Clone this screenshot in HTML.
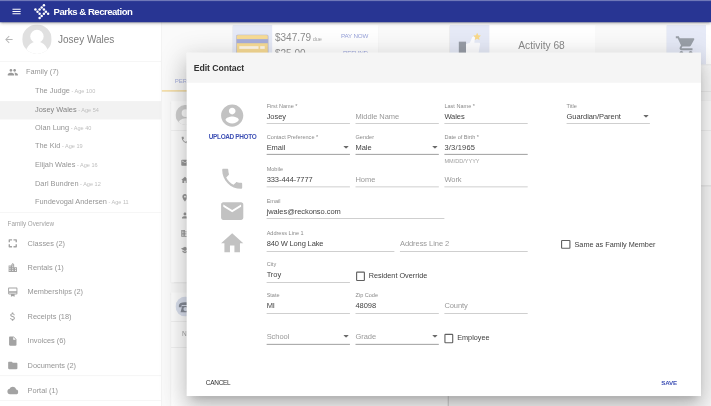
<!DOCTYPE html>
<html><head><meta charset="utf-8"><title>Parks &amp; Recreation</title>
<style>
html,body{margin:0;padding:0;width:711px;height:406px;overflow:hidden;background:#fafafa;}
body{font-family:"Liberation Sans",sans-serif;position:relative;will-change:transform;}
#s{position:absolute;left:0;top:0;width:1280px;height:731px;transform:scale(0.55547);transform-origin:0 0;overflow:hidden;background:#fafafa;}
#s *{box-sizing:border-box;}
.a{position:absolute;}
.t{position:absolute;white-space:nowrap;line-height:20px;height:20px;}
#hdr{left:0;top:0;width:1280px;height:40px;background:#283593;box-shadow:0 2px 4px -1px rgba(0,0,0,.3),0 4px 5px 0 rgba(0,0,0,.18),0 1px 10px 0 rgba(0,0,0,.14);z-index:5;}
#hdr .topline{left:0;top:0;width:1280px;height:2px;background:#6f78b8;}
#hdr .ttl{left:96.5px;top:11.0px;font-size:17.2px;letter-spacing:-0.88px;font-weight:bold;color:#fff;}
#side{left:0;top:0;width:291px;height:731px;background:#fff;z-index:3;border-right:1px solid #ececec;}
.nm{font-size:13.3px;color:#959595;left:63px;}
.nm small{font-size:10px;color:#bebebe;}
.mi{font-size:13.3px;color:#959595;left:49.7px;}
.hl{left:0;width:290px;background:#f2f2f2;}
.dv{left:0;width:290px;height:1px;background:#eeeeee;}
.card{background:#fff;box-shadow:0 1px 3px rgba(0,0,0,.12),0 1px 2px rgba(0,0,0,.1);}
.tile{left:0;top:0;width:70.8px;height:70.5px;background:#e6eaf7;}
#dlg{left:336px;top:95.2px;width:926px;height:618.3px;background:#fff;z-index:10;box-shadow:0 11px 15px -7px rgba(0,0,0,.2),0 24px 38px 3px rgba(0,0,0,.14),0 9px 46px 8px rgba(0,0,0,.12);}
#dlg .dh{left:0;top:0;width:926px;height:54px;background:#f5f5f5;}
.lb{font-size:10px;color:#8a8a8a;line-height:12px;height:12px;}
.v{font-size:13.5px;letter-spacing:-0.1px;color:#444444;}
.ph{font-size:13.5px;letter-spacing:-0.1px;color:#999999;}
.ul{height:1.3px;background:#a9a9a9;}
.cb{border:2px solid #606060;border-radius:2px;}
.cl{font-size:13.1px;color:#3d3d3d;}
.btn{font-size:11.6px;letter-spacing:-0.62px;font-weight:bold;}
</style></head><body>
<div id="s">
<div class="a" id="main" style="left:290px;top:40px;width:990px;height:691px;background:#fafafa;"></div>
<div class="a card" style="left:419.3px;top:45.4px;width:262px;height:70.6px"><div class="a tile"></div><svg class="a" style="left:6.2px;top:17px" width="58.4" height="46" viewBox="0 0 58.4 46"><rect x="0.5" y="0.5" width="57.4" height="45" rx="3" fill="#f8dc95" stroke="#aab1dd" stroke-width="1.2"/><rect x="1" y="8.4" width="56.4" height="7.4" fill="#a7aedb"/><rect x="5.8" y="21.2" width="34.6" height="4.8" fill="#fff9ec"/><rect x="43.4" y="21.2" width="8.2" height="4.8" fill="#fff9ec"/></svg><div class="t" style="left:75.7px;top:10.8px;font-size:18px;line-height:24px;height:24px;color:#8e8e8e">$347.79<span style="font-size:10px;color:#a5a5a5"> due</span></div><div class="t" style="left:75.7px;top:39.6px;font-size:18px;line-height:24px;height:24px;color:#8e8e8e">$25.00<span style="font-size:10px;color:#a5a5a5"> credit</span></div><div class="t btn" style="left:194.7px;top:9.6px;color:#98a2d9;font-weight:normal;font-size:11.2px;letter-spacing:-0.3px">PAY NOW</div><div class="t btn" style="left:198px;top:40px;color:#98a2d9;font-weight:normal;font-size:11.2px;letter-spacing:-0.3px">REFUND</div></div>
<div class="a card" style="left:810.1px;top:45.4px;width:262px;height:70.6px"><div class="a tile"></div><svg class="a" style="left:12px;top:14px" width="46" height="46" viewBox="0 0 46 46"><rect x="4" y="16" width="13" height="26" fill="#989da7"/><path fill="#fdfdff" d="M17 20 L24 18 L28 8 Q31 5 33 9 L32 18 L41 18 Q43 19 42 22 L39 40 Q38 42 35 42 L17 42 Z"/><path fill="#f9d98a" d="M37 0 L39.1 4.3 L43.8 5 L40.4 8.3 L41.2 13 L37 10.8 L32.8 13 L33.6 8.3 L30.2 5 L34.9 4.3 Z"/></svg><div class="t" style="left:122.9px;top:24.2px;font-size:18.4px;line-height:24px;height:24px;color:#8a8a8a">Activity 68</div></div>
<div class="a card" style="left:1200.3px;top:45.4px;width:262px;height:70.6px"><div class="a tile"></div><svg class="a" style="left:15px;top:16.5px" width="40" height="40" viewBox="0 0 24 24"><path fill="#9aa0a8" d="M7 18c-1.1 0-1.99.9-1.99 2S5.9 22 7 22s2-.9 2-2-.9-2-2-2zM1 2v2h2l3.6 7.59-1.35 2.45c-.16.28-.25.61-.25.96 0 1.1.9 2 2 2h12v-2H7.42c-.14 0-.25-.11-.25-.25l.03-.12.9-1.63h7.45c.75 0 1.41-.41 1.75-1.03l3.58-6.49c.08-.14.12-.31.12-.48 0-.55-.45-1-1-1H5.21l-.94-2H1zm16 16c-1.1 0-1.99.9-1.99 2s.89 2 1.99 2 2-.9 2-2-.9-2-2-2z"/></svg></div>
<div class="a" style="left:290px;top:164px;width:990px;height:1px;background:#e2e2e2"></div>
<div class="a" style="left:290px;top:162.3px;width:200px;height:2.7px;background:#f6e0ab"></div>
<div class="t" style="left:314.5px;top:134.7px;font-size:11px;color:#a8b0dc">PERSONAL</div>
<div class="a card" style="left:307.5px;top:181.5px;width:499.5px;height:327.5px"><svg class="a" style="left:8.8px;top:7.5px" width="36" height="36" viewBox="0 0 36 36"><defs><clipPath id="avc2"><circle cx="18" cy="18" r="18"/></clipPath></defs><circle cx="18" cy="18" r="18" fill="#d2d2d2"/><g clip-path="url(#avc2)" fill="#fff"><circle cx="18" cy="14.5" r="7"/><ellipse cx="18" cy="34" rx="13.5" ry="10"/></g></svg><div class="a" style="left:0;top:52.5px;width:954px;height:1px;background:#e8e8e8"></div></div>
<svg class="a" style="left:324.5px;top:244.3px" width="16" height="16" viewBox="0 0 24 24"><path fill="#9c9c9c" d="M6.62 10.79c1.44 2.83 3.76 5.14 6.59 6.59l2.2-2.2c.27-.27.67-.36 1.02-.24 1.12.37 2.33.57 3.57.57.55 0 1 .45 1 1V20c0 .55-.45 1-1 1-9.39 0-17-7.61-17-17 0-.55.45-1 1-1h3.5c.55 0 1 .45 1 1 0 1.25.2 2.45.57 3.57.11.35.03.74-.25 1.02l-2.2 2.2z"/></svg>
<svg class="a" style="left:324.5px;top:284.6px" width="16" height="16" viewBox="0 0 24 24"><path fill="#9c9c9c" d="M20 4H4c-1.1 0-1.99.9-1.99 2L2 18c0 1.100.9 2 2 2h16c1.1 0 2-.9 2-2V6c0-1.1-.9-2-2-2zm0 4l-8 5-8-5V6l8 5 8-5v2z"/></svg>
<svg class="a" style="left:324.5px;top:316.0px" width="16" height="16" viewBox="0 0 24 24"><path fill="#9c9c9c" d="M10 20v-6h4v6h5v-8h3L12 3 2 12h3v8z"/></svg>
<svg class="a" style="left:324.5px;top:347.7px" width="16" height="16" viewBox="0 0 24 24"><path fill="#9c9c9c" d="M12 2C8.13 2 5 5.13 5 9c0 5.250 7 13 7 13s7-7.75 7-13c0-3.87-3.13-7-7-7zm0 9.5c-1.38 0-2.5-1.12-2.5-2.5s1.12-2.5 2.5-2.5 2.5 1.12 2.5 2.5-1.12 2.5-2.5 2.500z"/></svg>
<svg class="a" style="left:324.5px;top:379.8px" width="16" height="16" viewBox="0 0 24 24"><path fill="#9c9c9c" d="M12 12c2.21 0 4-1.79 4-4s-1.79-4-4-4-4 1.79-4 4 1.79 4 4 4zm0 2c-2.67 0-8 1.34-8 4v2h16v-2c0-2.66-5.33-4-8-4z"/></svg>
<svg class="a" style="left:324.5px;top:411.5px" width="16" height="16" viewBox="0 0 24 24"><path fill="#9c9c9c" d="M12 7V3H2v18h20V7H12zM6 19H4v-2h2v2zm0-4H4v-2h2v2zm0-4H4V9h2v2zm0-4H4V5h2v2zm4 12H8v-2h2v2zm0-4H8v-2h2v2zm0-4H8V9h2v2zm0-4H8V5h2v2zm10 12h-8v-2h2v-2h-2v-2h2v-2h-2V9h8v10zm-2-8h-2v2h2v-2zm0 4h-2v2h2v-2z"/></svg>
<svg class="a" style="left:324.5px;top:442.4px" width="16" height="16" viewBox="0 0 24 24"><path fill="#9c9c9c" d="M5 13.18v4L12 21l7-3.82v-4L12 17l-7-3.82zM12 3L1 9l11 6 9-4.91V17h2V9L12 3z"/></svg>
<div class="a card" style="left:307.5px;top:526.2px;width:499.5px;height:230px"><svg class="a" style="left:8.8px;top:7.8px" width="36" height="36" viewBox="0 0 36 36"><circle cx="18" cy="18" r="18" fill="#dbe1ef"/><path fill="#868c98" d="M6 16 Q6 10 18 10 Q30 10 30 16 L30 19 L25 19 L25 15 L11 15 L11 19 L6 19 Z M9 28 L12 17 L24 17 L27 28 Z"/><circle cx="18" cy="22.5" r="3.8" fill="#dbe1ef"/></svg><div class="a" style="left:0;top:51.8px;width:499.5px;height:1px;background:#e8e8e8"></div><div class="t" style="left:20.3px;top:65.1px;font-size:12px;color:#a2a2a2">Name</div><div class="a" style="left:0;top:99px;width:499.5px;height:1px;background:#e8e8e8"></div></div>
<div class="a" style="left:806.2px;top:526.2px;width:1.6px;height:230px;background:#d4d4d4"></div>
<div class="a card" style="left:823px;top:181px;width:470px;height:153px"><div class="a" style="left:0;top:53.4px;width:470px;height:1px;background:#e8e8e8"></div></div>
<div class="a" id="hdr"><div class="a topline"></div><svg class="a" style="left:20.1px;top:10.96px" width="19.6" height="19.6" viewBox="0 0 24 24"><path fill="#fff" d="M3 18h18v-2H3v2zm0-5h18v-2H3v2zm0-7v2h18V6H3z"/></svg><svg class="a" id="logo" style="left:57.6px;top:3.6px" width="32" height="34" viewBox="32 2 17.78 18.89"><circle cx="43.70" cy="5.10" r="1.25" fill="#fff"/><circle cx="41.50" cy="7.30" r="1.25" fill="#fff"/><circle cx="35.20" cy="9.40" r="1.25" fill="#fff"/><circle cx="39.40" cy="9.40" r="1.25" fill="#fff"/><circle cx="43.70" cy="9.40" r="1.25" fill="#fff"/><circle cx="37.30" cy="11.50" r="1.25" fill="#fff"/><circle cx="45.70" cy="11.50" r="1.25" fill="#fff"/><circle cx="39.40" cy="13.60" r="1.25" fill="#fff"/><circle cx="43.70" cy="13.60" r="1.25" fill="#fff"/><circle cx="47.90" cy="13.60" r="1.25" fill="#fff"/><circle cx="41.50" cy="15.70" r="1.25" fill="#fff"/><circle cx="39.40" cy="17.80" r="1.25" fill="#fff"/></svg><div class="t ttl">Parks &amp; Recreation</div></div>
<div class="a" id="side">
<svg class="a" style="left:6.1px;top:60.9px" width="20" height="20" viewBox="0 0 24 24"><path fill="#b6b6b6" d="M20 11H7.83l5.59-5.59L12 4l-8 8 8 8 1.41-1.41L7.83 13H20v-2z"/></svg>
<svg class="a" style="left:39.9px;top:43.8px" width="53" height="53" viewBox="0 0 53 53"><defs><clipPath id="avc"><circle cx="26.5" cy="26.5" r="26.5"/></clipPath></defs><circle cx="26.5" cy="26.5" r="26.5" fill="#e0e0e0"/><g clip-path="url(#avc)" fill="#fff"><circle cx="26.5" cy="21.5" r="12"/><ellipse cx="26.5" cy="58.5" rx="22" ry="28"/></g></svg>
<div class="t" style="left:104.5px;top:59.6px;font-size:18px;line-height:24px;height:24px;color:#7b7b7b">Josey Wales</div>
<div class="a dv" style="top:110px"></div>
<svg class="a" style="left:13px;top:119.6px" width="20" height="20" viewBox="0 0 24 24"><path fill="#9a9a9a" d="M16 11c1.66 0 2.990-1.34 2.99-3S17.66 5 16 5c-1.66 0-3 1.34-3 3s1.34 3 3 3zm-8 0c1.66 0 2.99-1.34 2.99-3S9.66 5 8 5C6.34 5 5 6.34 5 8s1.34 3 3 3zm0 2c-2.33 0-7 1.17-7 3.5V19h14v-2.5c0-2.33-4.67-3.5-7-3.5zm8 0c-.29 0-.62.02-.97.05 1.16.84 1.97 1.97 1.97 3.450V19h6v-2.5c0-2.33-4.67-3.5-7-3.5z"/></svg>
<div class="t mi" style="left:46.6px;top:119.6px">Family (7)</div>
<div class="a hl" style="top:181.5px;height:33px"></div>
<div class="t nm" style="left:63px;top:153.8px">The Judge<small> - Age 100</small></div>
<div class="t nm" style="left:63px;top:187.0px;color:#848484">Josey Wales<small> - Age 54</small></div>
<div class="t nm" style="left:63px;top:220.2px">Olan Lung<small> - Age 40</small></div>
<div class="t nm" style="left:63px;top:253.4px">The Kid<small> - Age 19</small></div>
<div class="t nm" style="left:63px;top:286.6px">Elijah Wales<small> - Age 16</small></div>
<div class="t nm" style="left:63px;top:319.8px">Darl Bundren<small> - Age 12</small></div>
<div class="t nm" style="left:63px;top:353.0px">Fundevogal Andersen<small> - Age 11</small></div>
<div class="a dv" style="top:382px"></div>
<div class="t" style="left:13.7px;top:392.9px;font-size:11.3px;color:#a2a2a2">Family Overview</div>
<svg class="a" style="left:13.4px;top:427.5px" width="20" height="20" viewBox="0 0 24 24"><path fill="#a3a3a3" d="M3 4.5V10h3V6h4.5V3H4.5C3.7 3 3 3.700 3 4.5zM6 14H3v5.5c0 .8.7 1.5 1.5 1.5H10.500v-3H6v-4zm12 4h-4.500v3H19.500c.8 0 1.5-.7 1.5-1.5V14h-3v4zM19.500 3H13.500v3H18v4h3V4.500C21 3.700 20.300 3 19.500 3z"/></svg>
<div class="t mi" style="top:427.5px">Classes (2)</div>
<svg class="a" style="left:13.4px;top:471.5px" width="20" height="20" viewBox="0 0 24 24"><path fill="#a3a3a3" d="M15 11V5l-3-3-3 3v2H3v14h18V11h-6zm-8 8H5v-2h2v2zm0-4H5v-2h2v2zm0-4H5V9h2v2zm6 8h-2v-2h2v2zm0-4h-2v-2h2v2zm0-4h-2V9h2v2zm0-4h-2V5h2v2zm6 12h-2v-2h2v2zm0-4h-2v-2h2v2z"/></svg>
<div class="t mi" style="top:471.5px">Rentals (1)</div>
<svg class="a" style="left:13.4px;top:515.5px" width="20" height="20" viewBox="0 0 24 24"><path fill="#a3a3a3" d="M20 2H4c-1.11 0-2 .89-2 2v11c0 1.11.89 2 2 2h4v5l4-2 4 2v-5h4c1.11 0 2-.89 2-2V4c0-1.11-.89-2-2-2zm0 13H4v-2h16v2zm0-5H4V4h16v6z"/></svg>
<div class="t mi" style="top:515.5px">Memberships (2)</div>
<svg class="a" style="left:13.4px;top:559.5px" width="20" height="20" viewBox="0 0 24 24"><path fill="#a3a3a3" d="M11.8 10.9c-2.27-.59-3-1.2-3-2.15 0-1.09 1.01-1.85 2.7-1.85 1.78 0 2.44.85 2.5 2.1h2.21c-.07-1.72-1.12-3.3-3.21-3.81V3h-3v2.16c-1.94.42-3.5 1.68-3.5 3.61 0 2.31 1.91 3.46 4.7 4.13 2.5.6 3 1.48 3 2.41 0 .69-.49 1.79-2.7 1.79-2.06 0-2.87-.92-2.98-2.1h-2.2c.12 2.19 1.76 3.42 3.68 3.83V21h3v-2.15c1.95-.37 3.5-1.5 3.5-3.55 0-2.84-2.43-3.81-4.7-4.4z"/></svg>
<div class="t mi" style="top:559.5px">Receipts (18)</div>
<svg class="a" style="left:13.4px;top:603.5px" width="20" height="20" viewBox="0 0 24 24"><path fill="#a3a3a3" d="M6 2c-1.1 0-1.99.9-1.99 2L4 20c0 1.1.89 2 1.99 2H18c1.1 0 2-.9 2-2V8l-6-6H6zm7 7V3.5L18.5 9H13z"/></svg>
<div class="t mi" style="top:603.5px">Invoices (6)</div>
<svg class="a" style="left:13.4px;top:647.5px" width="20" height="20" viewBox="0 0 24 24"><path fill="#a3a3a3" d="M10 4H4c-1.1 0-1.99.9-1.99 2L2 18c0 1.1.9 2 2 2h16c1.1 0 2-.9 2-2V8c0-1.1-.9-2-2-2h-8l-2-2z"/></svg>
<div class="t mi" style="top:647.5px">Documents (2)</div>
<svg class="a" style="left:13.4px;top:692.5px" width="20" height="20" viewBox="0 0 24 24"><path fill="#a3a3a3" d="M19.35 10.04C18.67 6.59 15.64 4 12 4 9.11 4 6.6 5.64 5.35 8.04 2.34 8.36 0 10.91 0 14c0 3.31 2.69 6 6 6h13c2.76 0 5-2.24 5-5 0-2.64-2.05-4.78-4.65-4.96z"/></svg>
<div class="t mi" style="top:692.5px">Portal (1)</div>
<div class="a dv" style="top:675.5px"></div>
<div class="a dv" style="top:720.5px"></div>
</div>
<div class="a" id="dlg"><div class="a dh"></div></div>
<div class="a" id="dc" style="left:0;top:0;width:1280px;height:731px;z-index:11">
<div class="t" style="left:348.8px;top:109.7px;font-size:15.7px;letter-spacing:-0.15px;line-height:24px;height:24px;font-weight:bold;color:#333333">Edit Contact</div>
<div class="t lb" style="left:480px;top:185.78px">First Name *</div><div class="t v" style="left:480px;top:200.37px">Josey</div><div class="a ul" style="left:480px;top:222.04px;width:150px"></div>
<div class="t ph" style="left:640px;top:200.37px">Middle Name</div><div class="a ul" style="left:640px;top:222.04px;width:150px"></div>
<div class="t lb" style="left:800px;top:185.78px">Last Name *</div><div class="t v" style="left:800px;top:200.37px">Wales</div><div class="a ul" style="left:800px;top:222.04px;width:150px"></div>
<div class="t lb" style="left:1020px;top:185.78px">Title</div><div class="t v" style="left:1020px;top:200.37px">Guardian/Parent</div><div class="a ul" style="left:1020px;top:222.04px;width:150px"></div><svg class="a" style="left:1157.8px;top:207.4px" width="10" height="5" viewBox="0 0 10 5"><path d="M0 0h10L5 5z" fill="#6a6a6a"/></svg>
<div class="t lb" style="left:480px;top:241.58px">Contact Preference *</div><div class="t v" style="left:480px;top:256.17px">Email</div><div class="a ul" style="left:480px;top:277.31px;width:150px"></div><svg class="a" style="left:617.8px;top:263.2px" width="10" height="5" viewBox="0 0 10 5"><path d="M0 0h10L5 5z" fill="#6a6a6a"/></svg>
<div class="t lb" style="left:640px;top:241.58px">Gender</div><div class="t v" style="left:640px;top:256.17px">Male</div><div class="a ul" style="left:640px;top:277.31px;width:150px"></div><svg class="a" style="left:777.8px;top:263.2px" width="10" height="5" viewBox="0 0 10 5"><path d="M0 0h10L5 5z" fill="#6a6a6a"/></svg>
<div class="t lb" style="left:800px;top:241.58px">Date of Birth *</div><div class="t v" style="left:800px;top:256.17px"><span style="letter-spacing:0.35px">3/3/1965</span></div><div class="a ul" style="left:800px;top:277.31px;width:150px"></div>
<div class="t lb" style="left:800px;top:283.7px;color:#a0a0a0">MM/DD/YYYY</div>
<div class="t lb" style="left:480px;top:299.19px">Mobile</div><div class="t v" style="left:480px;top:313.78px">333-444-7777</div><div class="a ul" style="left:480px;top:336.18px;width:150px"></div>
<div class="t ph" style="left:640px;top:313.78px">Home</div><div class="a ul" style="left:640px;top:336.18px;width:150px"></div>
<div class="t ph" style="left:800px;top:313.78px">Work</div><div class="a ul" style="left:800px;top:336.18px;width:150px"></div>
<div class="t lb" style="left:480px;top:356.80px">Email</div><div class="t v" style="left:480px;top:371.39px">jwales@reckonso.com</div><div class="a ul" style="left:480px;top:392.89px;width:320px"></div>
<div class="t lb" style="left:480px;top:414.41px">Address Line 1</div><div class="t v" style="left:480px;top:429.00px"><span style="letter-spacing:-0.25px">840 W Long Lake</span></div><div class="a ul" style="left:480px;top:451.76px;width:230px"></div>
<div class="t ph" style="left:720px;top:429.00px">Address Line 2</div><div class="a ul" style="left:720px;top:451.76px;width:230px"></div>
<div class="t lb" style="left:480px;top:470.22px">City</div><div class="t v" style="left:480px;top:484.81px">Troy</div><div class="a ul" style="left:480px;top:507.75px;width:150px"></div>
<div class="t lb" style="left:480px;top:526.03px">State</div><div class="t v" style="left:480px;top:540.62px">MI</div><div class="a ul" style="left:480px;top:563.56px;width:150px"></div>
<div class="t lb" style="left:640px;top:526.03px">Zip Code</div><div class="t v" style="left:640px;top:540.62px">48098</div><div class="a ul" style="left:640px;top:563.56px;width:150px"></div>
<div class="t ph" style="left:800px;top:540.62px">County</div><div class="a ul" style="left:800px;top:563.56px;width:150px"></div>
<div class="t ph" style="left:480px;top:596.43px">School</div><div class="a ul" style="left:480px;top:619.37px;width:150px"></div><svg class="a" style="left:617.8px;top:603.4px" width="10" height="5" viewBox="0 0 10 5"><path d="M0 0h10L5 5z" fill="#6a6a6a"/></svg>
<div class="t ph" style="left:640px;top:596.43px">Grade</div><div class="a ul" style="left:640px;top:619.37px;width:150px"></div><svg class="a" style="left:777.8px;top:603.4px" width="10" height="5" viewBox="0 0 10 5"><path d="M0 0h10L5 5z" fill="#6a6a6a"/></svg>
<div class="a cb" style="left:1010.32px;top:431.62px;width:16.74px;height:16.74px"></div><div class="t cl" style="left:1034.3px;top:430.94px">Same as Family Member</div>
<div class="a cb" style="left:640.54px;top:489.14px;width:16.74px;height:16.74px"></div><div class="t cl" style="left:663.8px;top:486.75px">Resident Override</div>
<div class="a cb" style="left:799.68px;top:600.84px;width:16.74px;height:16.74px"></div><div class="t cl" style="left:823.1px;top:598.37px">Employee</div>
<svg class="a" style="left:394px;top:184px" width="48" height="48" viewBox="0 0 24 24"><path fill="#c2c2c2" d="M12 2C6.48 2 2 6.48 2 12s4.48 10 10 10 10-4.48 10-10S17.52 2 12 2zm0 3c1.66 0 3 1.34 3 3s-1.34 3-3 3-3-1.34-3-3 1.34-3 3-3zm0 14.2c-2.5 0-4.71-1.28-6-3.22.03-1.99 4-3.08 6-3.08 1.990 0 5.97 1.09 6 3.08-1.29 1.94-3.5 3.22-6 3.22z"/></svg>
<div class="t btn" style="left:375.9px;top:235.7px;color:#3f51b5">UPLOAD PHOTO</div>
<svg class="a" style="left:394px;top:297.9px" width="48" height="48" viewBox="0 0 24 24"><path fill="#c2c2c2" d="M6.62 10.79c1.44 2.83 3.76 5.14 6.59 6.59l2.2-2.2c.27-.27.67-.36 1.02-.24 1.12.37 2.33.57 3.57.57.55 0 1 .45 1 1V20c0 .55-.45 1-1 1-9.39 0-17-7.61-17-17 0-.55.45-1 1-1h3.5c.55 0 1 .45 1 1 0 1.25.2 2.45.57 3.57.11.35.03.74-.25 1.02l-2.2 2.2z"/></svg>
<svg class="a" style="left:394px;top:356.4px" width="48" height="48" viewBox="0 0 24 24"><path fill="#c2c2c2" d="M20 4H4c-1.1 0-1.99.9-1.99 2L2 18c0 1.100.9 2 2 2h16c1.1 0 2-.9 2-2V6c0-1.1-.9-2-2-2zm0 4l-8 5-8-5V6l8 5 8-5v2z"/></svg>
<svg class="a" style="left:394px;top:413.8px" width="48" height="48" viewBox="0 0 24 24"><path fill="#c2c2c2" d="M10 20v-6h4v6h5v-8h3L12 3 2 12h3v8z"/></svg>
<div class="t btn" style="left:370.5px;top:678.8px;color:#303030;font-weight:normal;letter-spacing:-0.45px">CANCEL</div>
<div class="t btn" style="left:1190.5px;top:678.8px;color:#3f51b5;font-size:11.2px;letter-spacing:-0.3px">SAVE</div>
</div>
</div>
</body></html>
